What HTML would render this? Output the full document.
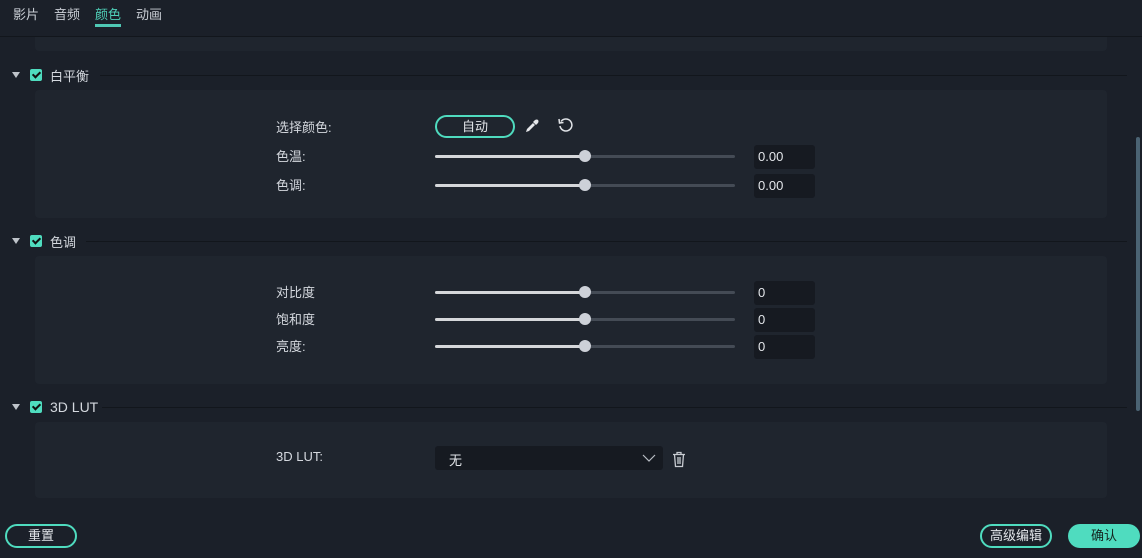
<!DOCTYPE html>
<html><head><meta charset="utf-8"><style>
*{margin:0;padding:0;box-sizing:border-box}
body{width:1142px;height:558px;background:#1b2029;font-family:"Liberation Sans","Noto Sans CJK SC",sans-serif;color:#d4d8de;font-size:13px;position:relative;overflow:hidden}
.a{position:absolute}
.tab{top:4px;font-size:13px;color:#c9ced5}
.panel{background:#1f252e;border-radius:4px;left:35px;width:1072px}
.hline{height:1px;background:#12161c;left:100px;width:1027px}
.tri{left:12px;width:0;height:0;border-left:4.5px solid transparent;border-right:4.5px solid transparent;border-top:6px solid #bfc4ca}
.cb{left:30px;width:12px;height:12px;background:#4fdcbf;border-radius:2px}
.cb:after{content:"";position:absolute;left:3.5px;top:1px;width:3px;height:6px;border:solid #111;border-width:0 2px 2px 0;transform:rotate(45deg)}
.st{left:50px;font-size:13px;color:#d4d8de}
.lbl{left:276px;font-size:13px;color:#d4d8de}
.track{left:435px;width:300px;height:3px;background:#444b55;border-radius:2px}
.track i{position:absolute;left:0;top:0;width:150px;height:3px;background:#d5d7da;border-radius:2px}
.knob{left:579px;width:12px;height:12px;border-radius:50%;background:#cdd1d8}
.inp{left:754px;width:61px;height:24px;background:#161a21;border-radius:3px;font-size:13px;padding:4px 0 0 4px;color:#e3e6ea}
.btn{border:2px solid #4fdcbf;border-radius:12px;text-align:center;font-size:13px;color:#e3e6ea}
</style></head><body>
<div class="a tab" style="left:13px">影片</div>
<div class="a tab" style="left:54px">音频</div>
<div class="a tab" style="left:95px;color:#4fd0b8">颜色</div>
<div class="a tab" style="left:136px">动画</div>
<div class="a" style="left:95px;top:24px;width:26px;height:3px;background:#4fc8b4"></div>
<div class="a" style="left:0;top:36px;width:1142px;height:1px;background:#12161c"></div>
<div class="a panel" style="top:37px;height:14px;border-radius:0 0 4px 4px"></div>
<div class="a" style="left:1136px;top:137px;width:4px;height:274px;background:#4b6373;border-radius:2px"></div>

<div class="a tri" style="top:72px"></div><div class="a cb" style="top:69px"></div><div class="a st" style="top:66px">白平衡</div><div class="a hline" style="top:75px"></div>
<div class="a panel" style="top:90px;height:128px"></div>
<div class="a lbl" style="top:117px">选择颜色:</div>
<div class="a btn" style="left:435px;top:115px;width:80px;height:23px;line-height:19px">自动</div>
<svg class="a" style="left:524px;top:118px" width="16" height="16" viewBox="0 0 16 16"><path d="M2 14 L3 11 L9 5 L11 7 L5 13 Z" fill="#e5e7ea"/><path d="M9 4 L11 2 Q13 1 14 2 Q15 3 14 5 L12 7 Z" fill="#e5e7ea"/></svg>
<svg class="a" style="left:557px;top:117px" width="17" height="17" viewBox="0 0 17 17"><path d="M4 4.5 A6 6 0 1 1 3 9" fill="none" stroke="#e0e3e7" stroke-width="1.5"/><path d="M2 2 L2.5 6 L6.5 5.5" fill="none" stroke="#e0e3e7" stroke-width="1.5"/></svg>
<div class="a lbl" style="top:146px">色温:</div><div class="a track" style="top:155px"><i></i></div><div class="a knob" style="top:150px"></div><div class="a inp" style="top:145px">0.00</div>
<div class="a lbl" style="top:175px">色调:</div><div class="a track" style="top:184px"><i></i></div><div class="a knob" style="top:179px"></div><div class="a inp" style="top:174px">0.00</div>

<div class="a tri" style="top:238px"></div><div class="a cb" style="top:235px"></div><div class="a st" style="top:232px">色调</div><div class="a hline" style="top:241px;left:86px;width:1041px"></div>
<div class="a panel" style="top:256px;height:128px"></div>
<div class="a lbl" style="top:282px">对比度</div><div class="a track" style="top:291px"><i></i></div><div class="a knob" style="top:286px"></div><div class="a inp" style="top:281px">0</div>
<div class="a lbl" style="top:309px">饱和度</div><div class="a track" style="top:318px"><i></i></div><div class="a knob" style="top:313px"></div><div class="a inp" style="top:308px">0</div>
<div class="a lbl" style="top:336px">亮度:</div><div class="a track" style="top:345px"><i></i></div><div class="a knob" style="top:340px"></div><div class="a inp" style="top:335px">0</div>

<div class="a tri" style="top:404px"></div><div class="a cb" style="top:401px"></div><div class="a st" style="top:399px;font-size:14px">3D LUT</div><div class="a hline" style="top:407px;left:102px;width:1025px"></div>
<div class="a panel" style="top:422px;height:76px"></div>
<div class="a lbl" style="top:449px">3D LUT:</div>
<div class="a" style="left:435px;top:446px;width:228px;height:24px;background:#161a21;border-radius:3px;padding:4px 0 0 14px;color:#e3e6ea">无</div>
<svg class="a" style="left:642px;top:453px" width="14" height="10" viewBox="0 0 14 10"><path d="M1 2 L7 8 L13 2" fill="none" stroke="#b8bdc4" stroke-width="1.2"/></svg>
<svg class="a" style="left:671px;top:451px" width="16" height="17" viewBox="0 0 16 17"><path d="M2 3.5 H14 M6 3.5 V1.5 H10 V3.5 M3.5 3.5 L4.5 15.5 H11.5 L12.5 3.5 M7 6 V13 M9 6 V13" fill="none" stroke="#c8ccd2" stroke-width="1.3"/></svg>

<div class="a btn" style="left:5px;top:524px;width:72px;height:24px;line-height:20px">重置</div>
<div class="a btn" style="left:980px;top:524px;width:72px;height:24px;line-height:20px">高级编辑</div>
<div class="a" style="left:1068px;top:524px;width:72px;height:24px;line-height:24px;background:#4fdcbf;border-radius:12px;text-align:center;color:#14241f">确认</div>
</body></html>
